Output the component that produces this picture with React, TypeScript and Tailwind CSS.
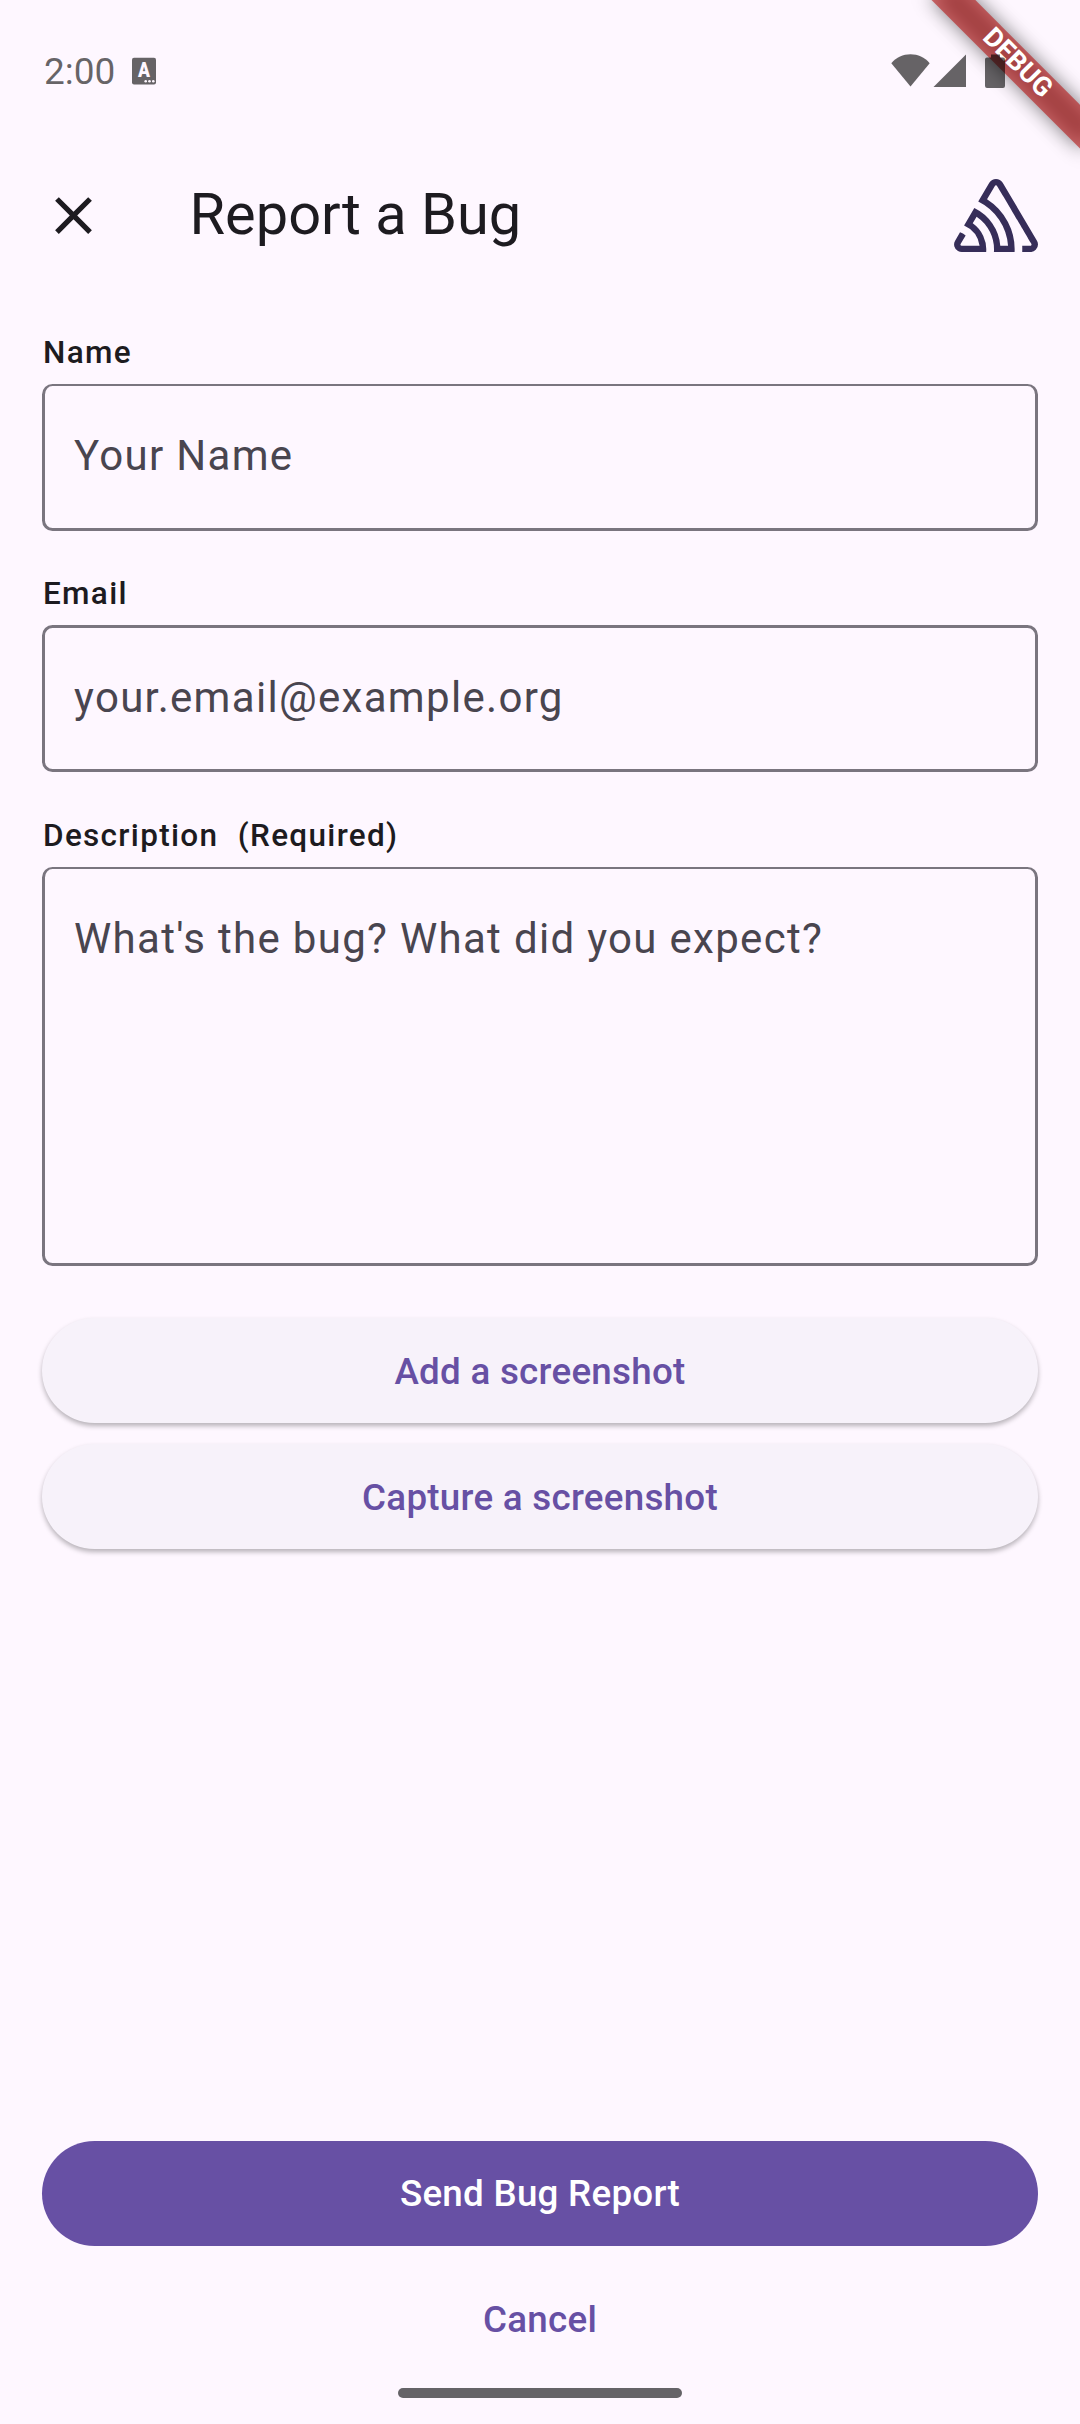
import React from "react";

function StatusBar() {
  return (
    <div className="flex h-[142px] w-full items-center text-black/60">
      <span className="ml-[44px] text-[37px] leading-none tracking-normal">2:00</span>
      <svg className="ml-[17px] h-[28px] w-[24px]" viewBox="0 0 24 28">
        <rect y="0.7" width="24" height="26.8" rx="2" fill="currentColor" />
        <text x="6" y="20.3" fill="#fef7ff" fontSize="19.5" fontWeight="900" textLength="12" lengthAdjust="spacingAndGlyphs">
          A
        </text>
        <g fill="#fef7ff">
          <circle cx="13.7" cy="24.2" r="1.3" />
          <circle cx="17.5" cy="24.2" r="1.3" />
          <circle cx="21.3" cy="24.2" r="1.3" />
        </g>
      </svg>
    </div>
  );
}

function SystemIcons() {
  return (
    <svg className="absolute left-[890px] top-[50px] h-[42px] w-[120px] text-black/60" viewBox="0 0 120 42">
      <g fill="currentColor">
        <path d="M1.3 13.2C6.5 7 13 4.2 20.5 4.2S34.5 7 39.7 13.2L20.5 36.5z" />
        <path d="M76 4.5V37H43.5z" />
        <path d="M101 4.5h9v3h3a2 2 0 0 1 2 2V36a2 2 0 0 1-2 2H97a2 2 0 0 1-2-2V9.5a2 2 0 0 1 2-2h4z" />
      </g>
    </svg>
  );
}

function DebugBanner() {
  return (
    <div className="pointer-events-none absolute right-0 top-0 h-[200px] w-[200px] overflow-hidden">
      <div className="absolute left-full top-0 h-0 w-0 rotate-45">
        <div className="absolute left-[-105px] top-[73.5px] h-[31.5px] w-[210px] bg-black/50 blur-[9.6px]" />
        <div className="absolute left-[-105px] top-[73.5px] flex h-[31.5px] w-[210px] items-center justify-center bg-[#b71c1c]/63 pb-[2.5px] pl-[0.5px] text-[26.775px] font-bold leading-none text-white">
          DEBUG
        </div>
      </div>
    </div>
  );
}

function CloseIcon() {
  return (
    <svg className="h-[63px] w-[63px]" viewBox="0 0 24 24" fill="#1d1b20">
      <path d="M19 6.41L17.59 5 12 10.59 6.41 5 5 6.41 10.59 12 5 17.59 6.41 19 12 13.41 17.59 19 19 17.59 13.41 12z" />
    </svg>
  );
}

function SentryLogo() {
  return (
    <svg className="h-[73px] w-[84px]" viewBox="0 0 50 44" preserveAspectRatio="none" fill="#362d59">
      <path d="M29,2.26a4.67,4.67,0,0,0-8,0L14.42,13.53A32.21,32.21,0,0,1,32.17,40.19H27.55A27.68,27.68,0,0,0,12.09,17.47L6,28a15.92,15.92,0,0,1,9.23,12.17H4.62A.76.76,0,0,1,4,39.06l2.94-5a10.74,10.74,0,0,0-3.36-1.9l-2.91,5a4.54,4.54,0,0,0,1.69,6.24A4.66,4.66,0,0,0,4.62,44H19.15a19.4,19.4,0,0,0-8-17.31l2.31-4A23.87,23.87,0,0,1,23.76,44H36.07a35.88,35.88,0,0,0-16.41-31.8l4.67-8a.77.77,0,0,1,1.05-.27c.53.29,20.29,34.77,20.66,35.17a.76.76,0,0,1-.68,1.13H40.6q.09,1.91,0,3.81h4.78A4.59,4.59,0,0,0,50,39.43a4.49,4.49,0,0,0-.62-2.28Z" />
    </svg>
  );
}

const labelClass = "flex h-[42px] items-center pt-[2px] pl-[1px] text-[31.5px] font-medium tracking-[1.3125px]";
const fieldClass =
  "block w-full resize-none rounded-[10.5px] border-[3px] border-[#7a757f] bg-transparent px-[29px] text-[42px] tracking-[1.3125px] text-[#49454f] outline-none placeholder:text-[#49454f] placeholder:opacity-100";
const pillClass =
  "flex h-[105px] w-full items-center justify-center rounded-full text-[36.75px] font-medium tracking-[0.2625px]";
const elevatedClass = "bg-[#f7f2fa] pt-[2px] text-[#6750a4] shadow-[0_3px_5px_rgba(0,0,0,0.28)]";

export default function App() {
  return (
    <div className="relative flex h-[2424px] w-[1080px] flex-col overflow-hidden bg-[#fef7ff] font-['Roboto',sans-serif] text-[#1d1b20]">
      <StatusBar />
      <header className="flex h-[147px] items-center px-[42px]">
        <CloseIcon />
        <h1 className="ml-[84.5px] flex-1 pb-[2px] text-[57.75px] leading-none">Report a Bug</h1>
        <SentryLogo />
      </header>

      <main className="flex flex-1 flex-col px-[42px] pt-[42px]">
        <label className={labelClass}>Name</label>
        <input className={`${fieldClass} mt-[11px] h-[147px] border-t-2 pb-[3px]`} placeholder="Your Name" />
        <label className={`${labelClass} mt-[41px]`}>Email</label>
        <input className={`${fieldClass} mt-[11px] h-[147px] pb-[3px]`} placeholder="your.email@example.org" />
        <label className={`${labelClass} mt-[42px]`}>
          <span>Description</span>
          <span className="ml-[19.5px]">(Required)</span>
        </label>
        <textarea
          className={`${fieldClass} mt-[11px] h-[399px] border-t-2 pt-[38px] leading-[63px]`}
          placeholder="What's the bug? What did you expect?"
        />
        <button className={`${pillClass} ${elevatedClass} mt-[52px]`}>Add a screenshot</button>
        <button className={`${pillClass} ${elevatedClass} mt-[21px]`}>Capture a screenshot</button>
      </main>

      <footer className="flex flex-col items-center px-[42px] pb-[26px]">
        <button className={`${pillClass} bg-[#6750a4] text-white`}>Send Bug Report</button>
        <button className={`${pillClass} mt-[21px] text-[#6750a4]`}>Cancel</button>
        <div className="mt-[16px] h-[10px] w-[284px] rounded-full bg-[#656367]" />
      </footer>

      <DebugBanner />
      <SystemIcons />
    </div>
  );
}
